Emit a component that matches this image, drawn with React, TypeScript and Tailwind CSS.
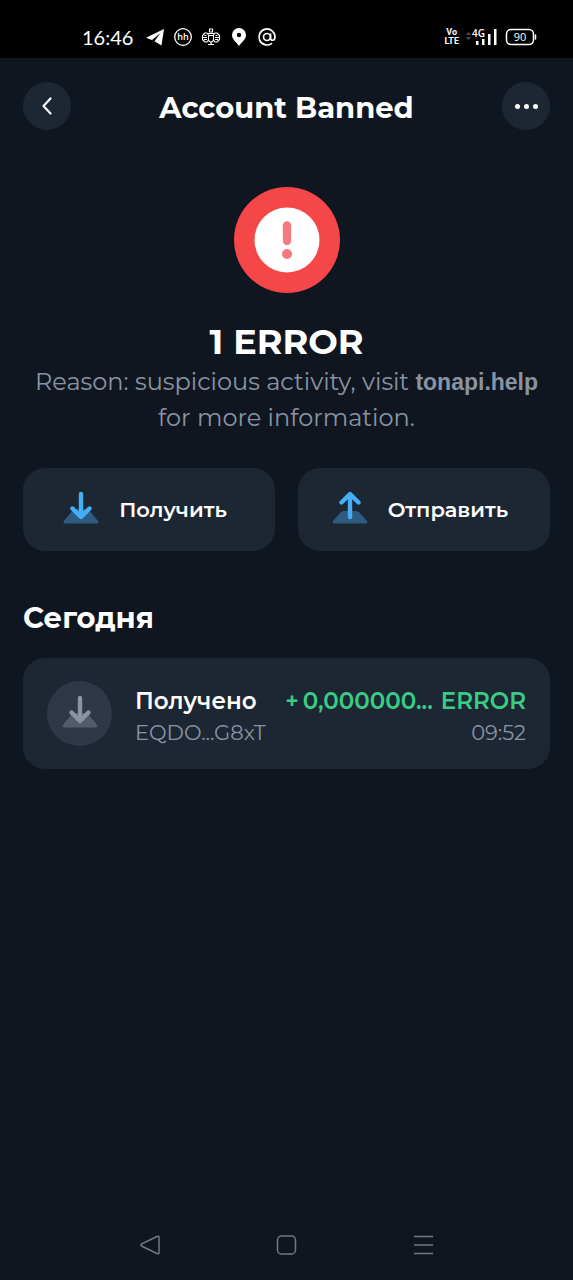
import { clsx } from "clsx";

function ReceiveIcon() {
  return (
    <svg viewBox="0 0 36 36" className="h-9 w-9 shrink-0" fill="none" aria-hidden="true">
      <path d="M12 19h12q1 0 2 1l9 11c1 1.200.5 2.500-1 2.500H2c-1.500 0-2-1.300-1-2.500l9-11q1-1 2-1z" fill="currentColor" opacity="0.4" />
      <path d="M18 4v22.500M9.500 18.500l8.500 8.500 8.500-8.500" stroke="currentColor" strokeWidth="4.400" strokeLinecap="round" strokeLinejoin="round" />
    </svg>
  );
}

function SendIcon() {
  return (
    <svg viewBox="0 0 36 36" className="h-9 w-9 shrink-0" fill="none" aria-hidden="true">
      <path d="M12 21h12q2 0 3.500 1.500l7.500 8.500c1 1.200.5 2.500-1 2.500H2c-1.500 0-2-1.300-1-2.500l7.500-8.500q1.500-1.500 3.500-1.500z" fill="currentColor" opacity="0.4" />
      <path d="M18 27V4.500M9.500 12.500L18 4l8.500 8.500" stroke="currentColor" strokeWidth="4.400" strokeLinecap="round" strokeLinejoin="round" />
    </svg>
  );
}

function StatusBar() {
  return (
    <div className="flex h-[58px] items-center bg-black pr-9 pl-[82px] pt-4 text-white">
      <span className="w-[63px] pb-px font-['Lato','Noto_Sans',sans-serif] text-xl leading-5">16:46</span>
      <div className="flex items-center gap-2">
        <svg viewBox="0 0 20 20" className="h-5 w-5" fill="currentColor" aria-hidden="true">
          <path d="M19 2L1 10.700l6 2.300L15.500 6 9.500 14.200l7 4.300z" />
        </svg>
        <svg viewBox="0 0 20 20" className="h-5 w-5" aria-hidden="true">
          <circle cx="10" cy="10" r="8.300" fill="none" stroke="currentColor" strokeWidth="1.300" />
          <text x="10" y="13" textAnchor="middle" className="fill-white font-['Open_Sans',sans-serif] text-[9px] font-semibold">hh</text>
        </svg>
        <svg viewBox="0 0 20 20" className="h-5 w-5" fill="none" stroke="currentColor" strokeWidth="1.100" strokeLinejoin="round" aria-hidden="true">
          <path d="M8.500 2h3v3h-3zM7.500 8.500h5v5L10 15.500l-2.500-2zM7.500 8L6 6H4L1.500 8.500v4L4 15h2l1.500-2M12.500 8L14 6h2l2.500 2.500v4L16 15h-2l-1.500-2M1 10.500h5M14 10.500h5M3 12.500h3M14 12.500h3M3.500 8.500h2M14.500 8.500h2M7 17.500h6M10 15.500v2M6.500 6.500h7" />
        </svg>
        <svg viewBox="0 0 20 20" className="h-5 w-5" fill="currentColor" aria-hidden="true">
          <path fillRule="evenodd" d="M10 1a7 7 0 0 0-7 7c0 4.500 4 6.500 7 11 3-4.500 7-6.500 7-11a7 7 0 0 0-7-7zm0 4.800a2.200 2.200 0 1 0 0 4.400 2.200 2.200 0 0 0 0-4.400z" />
        </svg>
        <svg viewBox="0 0 20 20" className="h-5 w-5" fill="none" stroke="currentColor" strokeWidth="1.700" strokeLinecap="round" aria-hidden="true">
          <circle cx="10" cy="10" r="3.500" />
          <path d="M13.500 7v4c0 3.300 4.500 3 4.500-1a8 8 0 1 0-3.500 6.600" />
        </svg>
      </div>
      <div className="ml-auto flex items-center">
        <div className="mr-1.5 text-center font-['Roboto',sans-serif] text-[9px] leading-[9px] font-bold">
          <div>Vo</div>
          <div>LTE</div>
        </div>
        <svg viewBox="0 0 32 20" className="mr-2 h-5 w-8" fill="currentColor" aria-hidden="true">
          <path d="M1 8l2.500-3L6 8zM1 10l2.500 3L6 10z" opacity="0.3" />
          <text x="7" y="10" className="fill-white font-['Open_Sans',sans-serif] text-[10px] font-semibold">4G</text>
          <path d="M11 14h2.500v4H11zM17 12h2.500v6H17zM23 7h2.500v11H23zM29 2h2.500v16H29z" />
        </svg>
        <svg viewBox="0 0 32 18" className="h-[18px] w-8" fill="none" stroke="currentColor" aria-hidden="true">
          <rect x="1.500" y="1.500" width="27" height="15" rx="4.500" strokeWidth="1.500" />
          <path d="M30.500 7v4" strokeWidth="1.500" strokeLinecap="round" />
          <text x="15" y="13" textAnchor="middle" stroke="none" className="fill-white font-['Open_Sans',sans-serif] text-[11px]">90</text>
        </svg>
      </div>
    </div>
  );
}

interface ActionButtonProps {
  label: string;
  icon: React.ReactNode;
  className?: string;
}

function ActionButton({ label, icon, className }: ActionButtonProps) {
  return (
    <button className={clsx("flex h-[83px] flex-1 items-center justify-center gap-5 rounded-[22px] bg-[#1d2633] pr-2 text-[21px] font-semibold", className)}>
      <span className="pb-1 text-[#45aef5]">{icon}</span>
      <span className="pt-px">{label}</span>
    </button>
  );
}

function Transaction() {
  return (
    <div className="mt-5 flex items-start rounded-[22px] bg-[#1d2633] px-6 pt-[23px] pb-5">
      <div className="mr-[23px] flex h-[65px] w-[65px] shrink-0 items-center justify-center rounded-full bg-[#2e3847] pb-1 text-[#8994a3]">
        <ReceiveIcon />
      </div>
      <div className="min-w-0 flex-1 pt-1">
        <div className="flex items-center justify-between text-[23px] leading-8 font-semibold">
          <span>Получено</span>
          <span className="flex text-[#39cc83]">
            <span className="mr-1">+</span>
            <span className="mr-2">0,000000...</span>
            <span>ERROR</span>
          </span>
        </div>
        <div className="flex items-center justify-between text-[21px] leading-8 text-[#8994a3]">
          <span>EQDO...G8xT</span>
          <span>09:52</span>
        </div>
      </div>
    </div>
  );
}

function NavigationBar() {
  return (
    <nav className="mt-auto flex h-[70px] items-center justify-between px-[138px] text-[#737780]">
      <button aria-label="Back">
        <svg viewBox="0 0 24 24" className="h-6 w-6" fill="none" stroke="currentColor" strokeWidth="1.500" strokeLinejoin="round">
          <path d="M19 3.500q2-1 2 1v15q0 2-2 1L3.500 13q-1.500-1 0-2z" />
        </svg>
      </button>
      <button aria-label="Home">
        <svg viewBox="0 0 24 24" className="h-6 w-6" fill="none" stroke="currentColor" strokeWidth="1.500">
          <rect x="2.500" y="3" width="18" height="18" rx="4" />
        </svg>
      </button>
      <button aria-label="Recent apps">
        <svg viewBox="0 0 24 24" className="h-6 w-6" fill="none" stroke="currentColor" strokeWidth="1.500">
          <path d="M3 3.500h19M3 12h19M3 20.500h19" />
        </svg>
      </button>
    </nav>
  );
}

export default function App() {
  return (
    <div className="flex min-h-screen flex-col bg-[#10161f] font-['Montserrat','Inter',sans-serif] text-white">
      <StatusBar />
      <main className="px-[23px] pt-6">
        <header className="flex items-center justify-between">
          <button aria-label="Go back" className="flex h-12 w-12 items-center justify-center rounded-full bg-[#1d2633]">
            <svg viewBox="0 0 12 20" className="h-5 w-3" fill="none" stroke="currentColor" strokeWidth="2.200" strokeLinecap="round" strokeLinejoin="round">
              <path d="M9.500 2.500L2.500 10l7 7.500" />
            </svg>
          </button>
          <h1 className="pt-[3px] text-[29px] leading-9 font-bold">Account Banned</h1>
          <button aria-label="More options" className="flex h-12 w-12 items-center justify-center gap-1 rounded-full bg-[#1d2633]">
            <span className="h-[5px] w-[5px] rounded-full bg-white" />
            <span className="h-[5px] w-[5px] rounded-full bg-white" />
            <span className="h-[5px] w-[5px] rounded-full bg-white" />
          </button>
        </header>

        <section className="mt-[57px] flex flex-col items-center text-center">
          <svg viewBox="0 0 106 106" className="h-[106px] w-[106px]" aria-hidden="true">
            <circle cx="53" cy="53" r="53" fill="#f54748" />
            <circle cx="53" cy="53" r="32.500" fill="#fff" />
            <path d="M48.700 38.500a4.300 4.300 0 0 1 8.600 0l-.3 15.500a4 4 0 0 1-8 0z" fill="#f67880" />
            <circle cx="53" cy="67" r="5" fill="#f67880" />
          </svg>
          <h2 className="mt-[26px] text-[35px] leading-[45px] font-bold">1 ERROR</h2>
          <p className="text-2xl leading-[35px] text-[#8994a3]">
            Reason: suspicious activity, visit{" "}
            <a href="#" className="font-['Liberation_Sans',sans-serif] text-[23px] font-bold">tonapi.help</a>{" "}
            for more information.
          </p>
        </section>

        <div className="mt-[33px] flex gap-[23px]">
          <ActionButton label="Получить" icon={<ReceiveIcon />} />
          <ActionButton label="Отправить" icon={<SendIcon />} />
        </div>

        <section className="mt-[47px]">
          <h3 className="text-[29px] leading-10 font-bold">Сегодня</h3>
          <Transaction />
        </section>
      </main>
      <NavigationBar />
    </div>
  );
}
